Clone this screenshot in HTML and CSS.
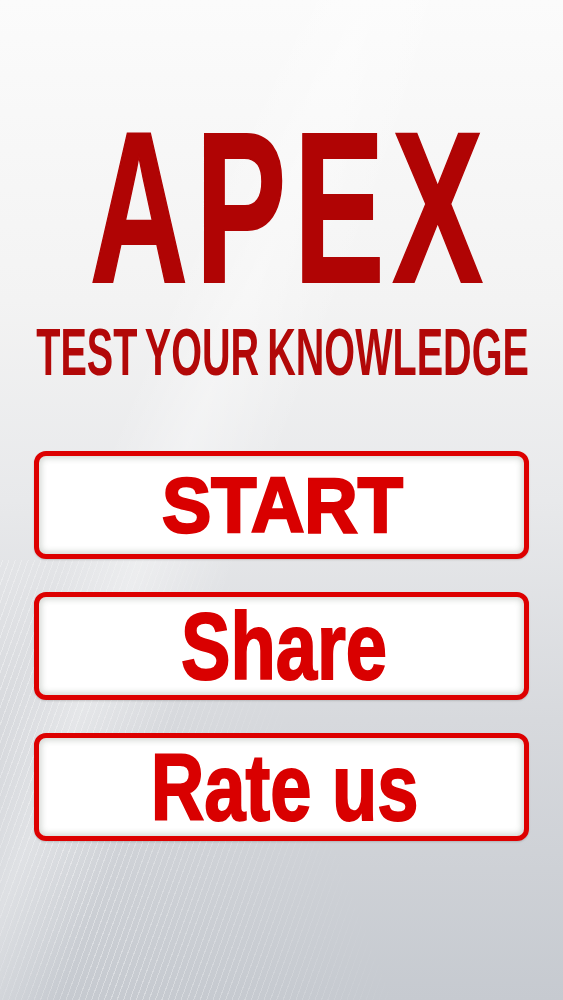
FILE: index.html
```html
<!DOCTYPE html>
<html>
<head>
<meta charset="utf-8">
<link rel="stylesheet" href="styles.css">
</head>
<body>
<div class="screen">
  <div class="lines"></div>
  <h1 class="title"><span class="title-text">APEX</span></h1>
  <p class="subtitle"><span class="subtitle-text">TEST YOUR KNOWLEDGE</span></p>
  <div class="menu">
    <button class="btn"><span class="btn-text btn-start">START</span></button>
    <button class="btn"><span class="btn-text btn-cond">Share</span></button>
    <button class="btn"><span class="btn-text btn-cond">Rate us</span></button>
  </div>
</div>
</body>
</html>
```
FILE: styles.css
```css
html, body {
  margin: 0;
  padding: 0;
}
body {
  font-family: "Liberation Sans", Arial, sans-serif;
}
.screen {
  position: relative;
  width: 563px;
  height: 1000px;
  overflow: hidden;
  background:
    linear-gradient(112deg, rgba(255,255,255,0) 30%, rgba(255,255,255,0.35) 38%, rgba(255,255,255,0) 48%),
    linear-gradient(180deg, #fbfbfb 0%, #f3f3f3 30%, #e8e9eb 50%, #d7d9dd 72%, #c6cad0 100%);
}
.lines {
  position: absolute;
  left: -100px;
  top: 560px;
  width: 520px;
  height: 520px;
  background: repeating-linear-gradient(110deg, rgba(255,255,255,0.35) 0 1px, rgba(255,255,255,0) 1px 6px);
  -webkit-mask-image: linear-gradient(70deg, rgba(0,0,0,0) 10%, rgba(0,0,0,1) 35%, rgba(0,0,0,0.6) 55%, rgba(0,0,0,0) 75%);
  mask-image: linear-gradient(70deg, rgba(0,0,0,0) 10%, rgba(0,0,0,1) 35%, rgba(0,0,0,0.6) 55%, rgba(0,0,0,0) 75%);
  pointer-events: none;
}
.title {
  position: relative;
  margin: 112px 0 0 0;
  height: 190px;
  font-size: 216px;
  line-height: 190px;
  font-weight: bold;
  color: #b00404;
  display: flex;
  justify-content: center;
  white-space: nowrap;
}
.title-text {
  display: block;
  flex: none;
  letter-spacing: 12px;
  margin-right: -12px;
  transform: translateX(3px) scaleX(0.63);
  transform-origin: center;
  -webkit-text-stroke: 2px #b00404;
}
.subtitle {
  position: relative;
  margin: 17px 0 0 0;
  height: 66px;
  font-size: 66px;
  line-height: 66px;
  font-weight: bold;
  color: #b20808;
  display: flex;
  justify-content: center;
  white-space: nowrap;
}
.subtitle-text {
  display: block;
  flex: none;
  word-spacing: -5px;
  transform: translateX(1px) scaleX(0.6);
  transform-origin: center;
}
.menu {
  position: relative;
  margin: 66px 0 0 34px;
  width: 495px;
  display: flex;
  flex-direction: column;
  gap: 33px;
}
.btn {
  box-sizing: border-box;
  height: 108px;
  width: 100%;
  padding: 0;
  border: 5px solid #dd0000;
  border-radius: 12px;
  background: #ffffff;
  box-shadow: inset 0 0 6px 2px rgba(140, 150, 140, 0.4), 0 1px 2px rgba(0,0,0,0.15);
  display: flex;
  align-items: center;
  justify-content: center;
  font-family: "Liberation Sans", Arial, sans-serif;
  font-weight: bold;
  color: #d90000;
  cursor: pointer;
}
.btn-text {
  display: block;
  flex: none;
  white-space: nowrap;
  transform-origin: center;
  -webkit-text-stroke: 2px #d90000;
}
.btn-start {
  font-size: 77px;
  line-height: 77px;
  -webkit-text-stroke: 2.5px #d90000;
  transform: translateX(1px) scaleX(0.96);
}
.btn-cond {
  font-size: 95px;
  line-height: 95px;
  transform: translateX(3px) scaleX(0.78);
}
```
